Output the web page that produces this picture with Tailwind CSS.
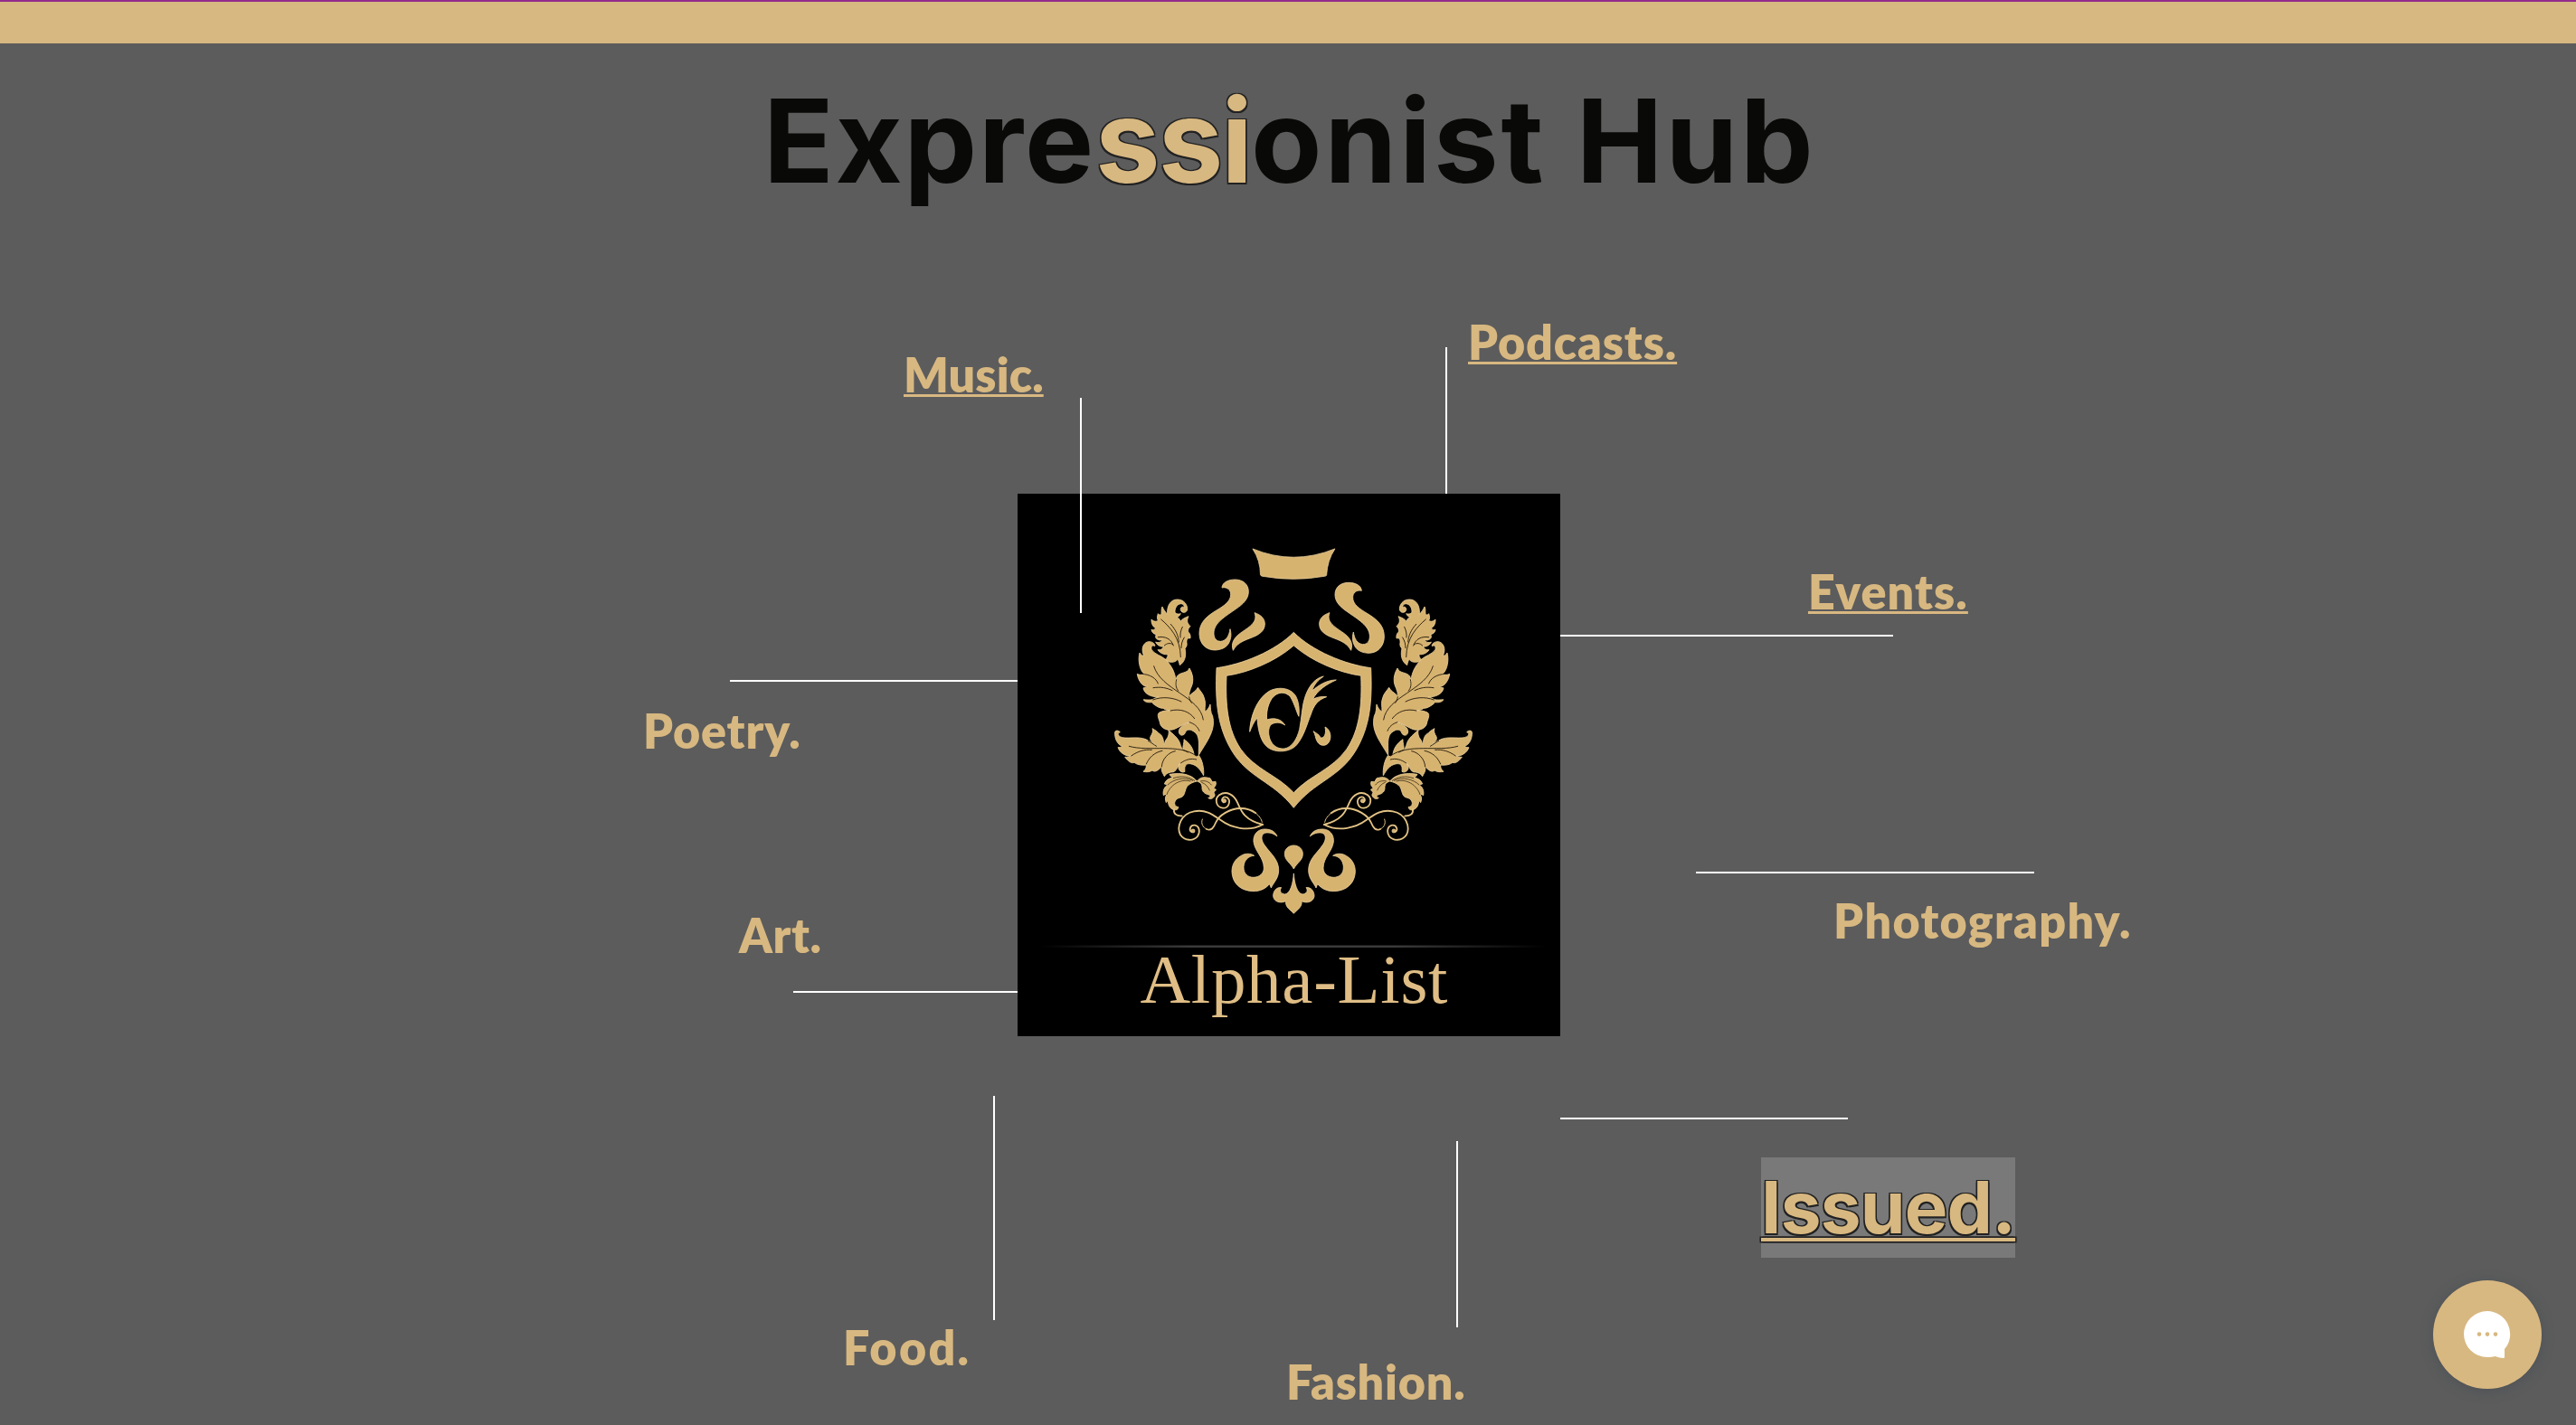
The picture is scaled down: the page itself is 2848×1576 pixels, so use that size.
<!DOCTYPE html>
<html lang="en">
<head>
<meta charset="utf-8">
<title>Expressionist Hub</title>
<script src="https://cdn.jsdelivr.net/npm/@tailwindcss/browser@4"></script>
</head>
<body class="relative h-[1576px] w-[2848px] overflow-hidden bg-[#5c5c5c]">
<header class="h-12 border-t-2 border-[#932a8d] bg-[#d8b881]"></header>

<h1 class="flex pt-[30px] pl-[844px] font-['Inter',sans-serif] text-[128px] leading-[155px] font-bold whitespace-nowrap text-[#090908]">
  <span class="tracking-[1.8px]">Expre</span>
  <span class="tracking-[-2px] text-[#d8b881] [text-shadow:-1.5px_-1.5px_0_#222,1.5px_-1.5px_0_#222,-1.5px_1.5px_0_#222,1.5px_1.5px_0_#222]">ssi</span>
  <span class="tracking-[3px]">onist Hub</span>
</h1>

<!-- Free-form map of topics around the crest -->
<main class="absolute inset-0 font-['Lato',sans-serif] text-[52px] leading-[62px] font-extrabold whitespace-nowrap text-[#d8b881]">
  <svg class="absolute top-[546px] left-[1125px] size-[600px] bg-black" viewBox="1125 546 600 600" fill="#d7b370" stroke="#ecd09a" stroke-width="1">
    <defs>
      <linearGradient id="rule" x1="0" x2="1"><stop offset="0" stop-color="#000"/><stop offset=".3" stop-color="#3a3a3a"/><stop offset=".7" stop-color="#3a3a3a"/><stop offset="1" stop-color="#000"/></linearGradient>
      <g id="scroll">
        <path d="M423 180C424 162 445 153 466 153C492 153 511 168 511 193C511 218 492 235 470 250C435 275 396 296 396 331C396 348 404 358 419 358C437 356 447 340 450 317C455 335 453 349 446 363C438 379 420 386 400 387C370 387 348 365 348 332C348 295 372 275 405 255C430 240 452 225 452 203C453 188 440 176 423 180Z"/>
      </g>
      <g id="petal">
        <path d="M531 263C552 270 565 282 565 300C565 325 545 337 515 348C490 357 470 368 460 388C452 365 462 347 485 330C510 312 544 295 531 263Z"/>
      </g>
      <g id="half">
        <!-- upper leaf -->
        <path d="M242 268C240 240 252 219 275 219C298 219 309 238 308 252C306 264 290 266 286 254C284 246 292 240 298 246C298 234 288 230 278 236C270 241 266 252 267 262C272 268 279 268 286 266C282 274 277 277 272 278C280 280 284 284 284 293C290 284 301 279 312 275C306 288 306 296 318 308C311 314 310 320 311 327C318 332 319 340 318 348C309 345 305 352 306 362C308 372 304 378 300 381C304 398 304 424 283 437C281 428 279 422 276 418C268 430 246 430 234 419C241 414 244 408 243 401C232 403 218 398 210 386C220 388 226 383 230 375C220 377 207 371 203 360C212 364 220 361 226 353C212 357 197 348 205 335C198 334 190 329 189 319C196 322 200 319 203 314C194 310 188 298 189 285C197 293 205 293 211 289C207 282 208 274 211 266C216 272 220 270 222 266C223 258 221 250 225 243C229 252 236 262 242 268Z"/>
        <!-- large leaf -->
        <path d="M346 735C344 710 354 668 328 656C316 648 304 650 300 664C292 674 279 670 280 655C282 640 302 632 315 626C300 630 285 640 268 648C246 658 219 648 217 627C214 616 206 602 215 594C228 588 244 586 252 588C240 586 232 584 228 580C212 580 195 566 190 560C178 562 164 558 163 551C172 552 184 553 192 551C200 547 206 543 212 542C190 544 165 532 163 515C158 510 170 514 176 508C160 510 144 486 142 466C148 470 158 470 165 466C148 452 144 416 150 396C154 404 160 406 164 405C152 382 164 357 184 359C196 361 202 368 200 374C192 368 186 376 190 386C200 402 222 404 238 420C258 442 272 468 270 503C274 512 266 490 274 474C286 458 308 466 315 447C324 462 328 478 326 492C326 506 312 520 314 542C318 530 334 528 343 511C352 524 362 534 364 546C370 560 366 572 366 592C372 588 380 580 384 567C386 580 384 592 392 606C402 650 380 680 346 735Z"/>
        <!-- lower leaf -->
        <path d="M362 803C352 786 342 768 318 764C300 762 298 776 300 790C290 796 276 786 279 772C280 766 284 764 288 762C272 768 276 794 254 792C244 794 236 798 232 806C228 796 220 790 223 774C212 786 200 794 192 786C184 792 172 792 162 790C170 784 172 778 172 768C158 770 142 768 132 760C122 764 112 756 101 742C110 742 116 740 122 738C104 740 84 728 78 710C82 710 88 710 92 706C76 700 66 680 68 658C72 652 82 654 85 660C78 660 76 668 84 674C104 684 140 672 168 682C182 688 196 696 206 706C190 690 182 686 186 674C192 664 196 656 192 647C204 654 210 658 212 662C226 668 230 684 230 702C232 706 232 690 238 684C246 674 248 664 246 652C256 664 280 676 286 704C290 712 290 716 294 718C292 706 298 696 297 683C310 692 326 706 330 732C334 740 342 742 346 736C358 752 364 780 362 803Z"/>
        <!-- twin leaflets -->
        <path d="M340 822C322 800 290 792 249 799C252 806 256 808 260 810C248 812 236 818 232 831C236 832 240 833 243 834C232 840 226 854 229 869C232 866 236 866 240 866C234 874 234 884 238 893C240 888 242 888 244 890C246 904 252 914 264 917C272 919 280 914 278 907C274 908 266 904 266 896C266 884 276 878 286 876C298 872 298 862 302 852C304 840 314 828 340 822C352 826 358 832 357 846C358 860 370 864 376 866C386 868 386 876 377 877C384 884 394 880 399 870C400 864 396 862 396 857C400 856 402 854 403 849C400 848 396 846 396 843C404 838 404 828 402 823C396 824 392 824 389 822C386 814 384 810 378 811C362 806 350 810 340 822Z"/>
        <!-- veins -->
        <g fill="none" stroke="#1a1206" stroke-width="2.6" stroke-linecap="round">
          <path d="M197 440C220 520 350 540 361 618M158 466C185 468 205 480 211 498M195 512C220 508 240 512 258 521M194 552C225 540 262 544 288 558M252 588C285 580 315 590 332 614M315 626C332 632 342 640 348 655M272 485C268 500 270 512 278 522M314 542C316 552 318 556 322 562"/>
          <path d="M115 706C180 725 280 695 338 738M122 738C145 722 165 716 190 718M172 765C180 745 198 726 225 721M223 774C224 748 246 726 268 722M286 762C302 750 320 745 338 750M206 706C196 700 186 692 178 688M294 718L310 726"/>
          <path d="M221 285C250 310 285 345 286 410M253 301C272 322 278 340 280 360M211 344C235 340 255 350 262 372M232 372C240 364 250 362 260 368M292 310C286 322 284 332 285 345M298 345C290 358 288 368 288 380"/>
          <path stroke-width="2" d="M262 812C290 802 315 808 332 820M243 834C262 815 300 806 326 820M240 866C250 835 285 812 318 822M352 822C368 818 380 824 388 834M356 826C368 830 376 840 382 852"/>
        </g>
        <!-- filigree -->
        <g fill="none" stroke="#e3c385" stroke-width="5.5" stroke-linecap="round">
          <path d="M264 915C262 930 272 938 290 937"/>
          <path d="M322 990C312 984 318 966 333 968C348 971 352 990 342 1005C330 1020 300 1022 285 1000C272 975 286 930 330 922C372 914 395 935 420 952C450 975 510 992 558 966"/>
          <path d="M372 981C388 988 396 975 402 960C412 935 450 912 485 912C505 912 522 918 535 928"/>
          <path stroke-width="3" d="M358 948C352 962 360 976 372 981M535 928C548 938 554 948 556 958"/>
          <path d="M428 892C418 884 426 870 440 876C454 886 446 912 426 911C402 908 398 880 414 868C438 852 462 866 474 892C486 918 494 950 558 966"/>
        </g>
        <circle cx="327" cy="987" r="6"/><circle cx="431" cy="887" r="6"/>
      </g>
      <g id="swan">
        <path d="M426 285C418 265 400 261 383 261C360 262 346 280 348 303C352 335 382 355 382 390C382 408 368 420 348 421C328 421 314 408 315 386C316 365 330 350 350 349C338 340 318 341 305 350C285 362 276 380 276 402C277 440 305 467 348 467C370 467 388 458 401 443L406 456C412 440 432 425 431 395C430 360 402 340 385 315C373 300 370 280 385 274C400 270 416 276 426 285Z"/>
      </g>
    </defs>

    <g transform="translate(1210 590) scale(.33333)" stroke-width="2.5">
      <use href="#scroll"/>
      <use href="#petal"/>
      <use href="#half"/>
      <g transform="translate(1320 0) scale(-1 1)"><use href="#half"/></g>
      <g transform="translate(1311 0) scale(-1 1)"><use href="#petal"/></g>
      <g transform="translate(1309 10) scale(-1 1)"><use href="#scroll"/></g>
      <!-- shield -->
      <path fill-rule="evenodd" d="M661 328C600 390 490 435 405 446C400 560 408 640 455 720C510 812 590 820 661 910C732 820 812 812 867 720C914 640 922 560 917 446C832 435 722 390 661 328ZM661 372C600 425 510 462 438 472C434 570 442 650 485 715C535 785 605 800 661 860C717 800 787 785 837 715C880 650 888 570 884 472C812 462 722 425 661 372Z"/>
    </g>

    <!-- crown band -->
    <path transform="translate(1120 540) scale(.38903)" stroke-width="2" d="M681 172Q797 220 915 172Q893 205 891 247Q890 250 886 250Q797 266 708 250Q704 249 703 246Q703 205 681 172Z"/>

    <!-- monogram -->
    <g transform="translate(1360 730) scale(.33333)" stroke-width="2.5">
      <path d="M65 238C66 195 85 130 130 103C158 88 200 90 218 120C228 140 230 160 228 187C222 178 214 145 200 122C182 102 155 105 138 128C124 150 120 175 122 198C145 190 170 195 182 216C165 204 148 206 136 214C126 224 126 245 132 262C140 285 160 296 180 294C205 290 222 262 230 230C238 190 238 150 250 118C262 85 282 60 310 54C290 68 278 82 272 102C295 82 322 66 352 66C320 80 290 100 274 130C290 122 305 120 320 122C290 132 278 150 268 180C254 215 246 250 222 280C200 308 140 312 115 280C98 258 92 225 90 192C78 205 72 222 65 238Z"/>
      <path d="M276 236C284 242 296 246 300 258C312 260 320 245 315 222C332 230 338 255 328 272C318 288 298 285 290 272C282 260 284 248 276 236Z"/>
    </g>

    <g transform="translate(1270 830) scale(.33333)" stroke-width="2.5">
      <use href="#swan"/>
      <g transform="translate(961 0) scale(-1 1)"><use href="#swan"/></g>
      <path d="M481 393C470 372 451 365 451 343C451 326 465 315 481 315C497 315 511 326 511 343C511 365 492 372 481 393Z"/>
      <path d="M481 408C479 440 470 475 452 477C438 476 432 464 440 455C424 452 412 468 413 484C416 503 438 508 455 500C452 520 470 528 481 541C492 528 510 520 507 500C524 508 546 503 549 484C550 468 538 452 522 455C530 464 524 476 510 477C492 475 483 440 481 408Z"/>
    </g>

    <rect x="1150" y="1045.500" width="560" height="2.5" fill="url(#rule)" stroke="none"/>
    <text x="1260.5" y="1109" textLength="340" stroke="none" fill="#dfbd85" class="font-['Liberation_Serif',serif] text-[77px] font-normal">Alpha-List</text>
  </svg>

  <div class="absolute top-[440px] left-[1194px] h-[238px] w-0.5 bg-white"></div>
  <div class="absolute top-[384px] left-[1598px] h-[162px] w-0.5 bg-white"></div>
  <div class="absolute top-[702px] left-[1725px] h-0.5 w-[368px] bg-white"></div>
  <div class="absolute top-[752px] left-[807px] h-0.5 w-[318px] bg-white"></div>
  <div class="absolute top-[964px] left-[1875px] h-0.5 w-[374px] bg-white"></div>
  <div class="absolute top-[1096px] left-[877px] h-0.5 w-[248px] bg-white"></div>
  <div class="absolute top-[1236px] left-[1725px] h-0.5 w-[318px] bg-white"></div>
  <div class="absolute top-[1212px] left-[1098px] h-[248px] w-0.5 bg-white"></div>
  <div class="absolute top-[1262px] left-[1610px] h-[206px] w-0.5 bg-white"></div>

  <a class="absolute top-[383px] left-[999px] tracking-[0.15px] underline decoration-3 underline-offset-2 [text-decoration-skip-ink:none]">Music.</a>
  <a class="absolute top-[347px] left-[1623px] tracking-[0.9px] underline decoration-3 underline-offset-2 [text-decoration-skip-ink:none]">Podcasts.</a>
  <a class="absolute top-[623px] left-[1999px] tracking-[1.1px] underline decoration-3 underline-offset-2 [text-decoration-skip-ink:none]">Events.</a>
  <a class="absolute top-[777px] left-[711px] tracking-[0.9px]">Poetry.</a>
  <a class="absolute top-[987px] left-[2027px] tracking-[1.35px]">Photography.</a>
  <a class="absolute top-[1003px] left-[817px] tracking-[0.6px]">Art.</a>
  <a class="absolute top-[1459px] left-[932px] tracking-[2.3px]">Food.</a>
  <a class="absolute top-[1497px] left-[1422px] tracking-[0.8px]">Fashion.</a>
  <a class="absolute top-[1280px] left-[1947px] h-[111px] w-[281px] bg-[#797979] font-['Inter',sans-serif] text-[80px] leading-[109px] font-bold tracking-[-0.8px] underline decoration-4 underline-offset-[5px] [text-decoration-skip-ink:none] [text-shadow:-1.5px_-1.5px_0_#222,1.5px_-1.5px_0_#222,-1.5px_1.5px_0_#222,1.5px_1.5px_0_#222]">Issued.</a>
</main>

<button aria-label="Chat" class="absolute top-[1416px] left-[2690px] flex size-[120px] items-center justify-center rounded-full bg-[#d8b881] shadow-[0_2px_14px_rgba(60,70,80,0.45)]">
  <svg class="size-[54px]" viewBox="0 0 54 54">
    <path fill="#fff" d="M27 1A26 25.500 0 1 0 27 52C30 52 33 51.600 35.500 51C39 52 42 53 45 53Q46 53 46 51.500V43A26 25.500 0 0 0 27 1Z"/>
    <g fill="#d8b881"><circle cx="18" cy="26.600" r="2.300"/><circle cx="27" cy="26.600" r="2.300"/><circle cx="36" cy="26.600" r="2.300"/></g>
  </svg>
</button>
</body>
</html>
